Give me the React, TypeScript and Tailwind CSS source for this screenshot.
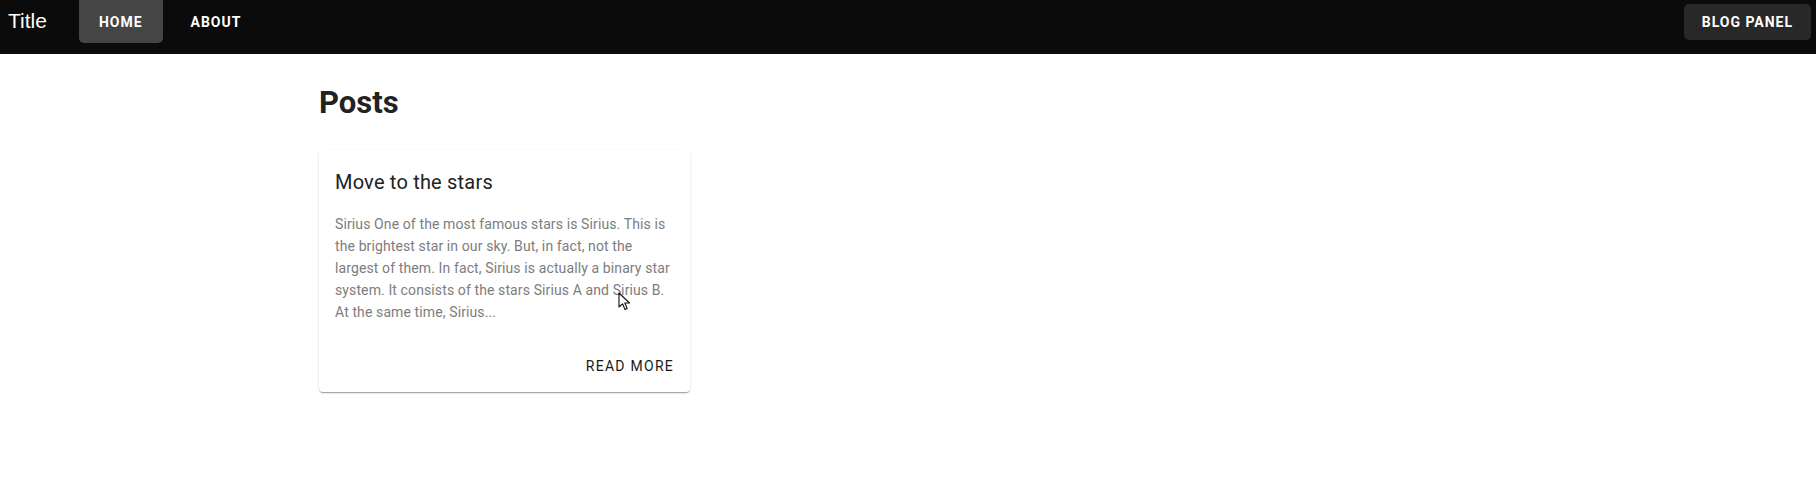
// ─── Blog posts page ─────────────────────────────────────────────────────────

const POST = {
  title: 'Move to the stars',
  lines: [
    'Sirius One of the most famous stars is Sirius. This is',
    'the brightest star in our sky. But, in fact, not the',
    'largest of them. In fact, Sirius is actually a binary star',
    'system. It consists of the stars Sirius A and Sirius B.',
    'At the same time, Sirius...',
  ],
}

function Header() {
  return (
    <header className="flex h-[54px] items-start bg-[#0b0b0b] text-white">
      <div className="pl-2 pt-[9px] font-['Liberation_Sans',sans-serif] text-[21px] leading-[24px]">
        Title
      </div>
      <nav className="ml-[32px] flex items-start">
        <button className="h-[43px] rounded-b-[5px] bg-[#454545] px-[20px] pt-[1px] text-[14px] font-bold tracking-[0.07em]">
          HOME
        </button>
        <button className="ml-[8px] h-[43px] px-[20px] pt-[1px] text-[14px] font-bold tracking-[0.07em]">
          ABOUT
        </button>
      </nav>
      <button className="ml-auto mr-[5px] mt-[4px] h-[36px] rounded-[5px] bg-[#282828] px-[18px] text-[14px] font-bold tracking-[0.07em]">
        BLOG PANEL
      </button>
    </header>
  )
}

function PostCard() {
  return (
    <div className="relative flex h-[242px] w-[371px] flex-col rounded-[4px] bg-white shadow-[0_2px_1px_-1px_rgba(0,0,0,0.2),0_1px_1px_0_rgba(0,0,0,0.14),0_1px_3px_0_rgba(0,0,0,0.12)]">
      <div className="p-4 pb-0">
        <h2 className="text-[20px] font-normal leading-[32px] tracking-[0.01em] text-[#222]">
          {POST.title}
        </h2>
        <p className="mt-[15px] whitespace-nowrap text-[14px] leading-[22px] tracking-[0.008em] text-[#7d7d7d]">
          {POST.lines.map((line, i) => (
            <span key={i} className="block">
              {line}
            </span>
          ))}
        </p>
      </div>
      <div className="mt-auto flex justify-end p-2">
        <button className="h-9 px-2 text-[14px] font-normal tracking-[0.09em] text-[#1a1a1a]">
          READ MORE
        </button>
      </div>

      {/* mouse pointer */}
      <svg
        className="pointer-events-none absolute left-[299px] top-[142px]"
        width="13"
        height="20"
        viewBox="0 0 13 20"
      >
        <path
          d="M1 1 L1 15 L4.5 11.8 L7 17.5 L9.2 16.5 L6.8 11 L11.5 11 Z"
          fill="#fff"
          stroke="#111"
          strokeWidth="1.1"
          strokeLinejoin="round"
        />
      </svg>
    </div>
  )
}

export default function App() {
  return (
    <div className="min-h-[490px] bg-white font-['Roboto',sans-serif]">
      <Header />
      <main className="mx-auto w-[1178px]">
        <h1 className="mt-[28px] text-[31px] font-bold leading-[42px] text-[#222]">Posts</h1>
        <div className="mt-[26px]">
          <PostCard />
        </div>
      </main>
    </div>
  )
}
